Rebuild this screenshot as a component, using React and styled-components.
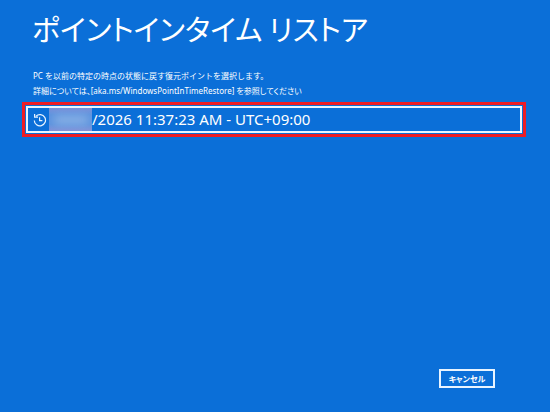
import React from 'react';
import styled, { createGlobalStyle } from 'styled-components';

const GlobalStyle = createGlobalStyle`
  * {
    box-sizing: border-box;
  }

  body {
    margin: 0;
    background: #0b6fd8;
    color: #fff;
    font-family: "Noto Sans", "Noto Sans CJK JP", sans-serif;
  }
`

const Page = styled.main`
  display: flex;
  flex-direction: column;
  min-height: 100vh;
  padding: 6px 24px 24px 22px;
`

const Title = styled.h1`
  margin: 0 0 18px;
  padding-left: 10px;
  font-family: "Noto Sans CJK JP", sans-serif;
  font-feature-settings: "palt";
  font-size: 29px;
  font-weight: 400;
  line-height: 44px;
`

const Description = styled.p`
  margin: 0;
  padding-left: 11px;
  font-size: 8px;
  line-height: 15px;
  font-feature-settings: ${props => props.$compact ? '"palt"' : 'normal'};
`

const RestorePoints = styled.ul`
  margin: 4px 0 0;
  padding: 0;
  list-style: none;
`

const Highlight = styled.li`
  padding: 1px;
  border: 3px solid #ee1c25;
`

const RestorePoint = styled.button`
  display: flex;
  align-items: center;
  width: 100%;
  height: 27px;
  padding: 0 5px;
  border: 2px solid #e9f4ff;
  background: transparent;
  color: inherit;
  font: inherit;
  font-size: 15px;
  line-height: 23px;
  text-align: left;
`

const HistoryIcon = styled.svg`
  flex: none;
  width: 14px;
  height: 14px;
  margin-right: 2px;
`

const Redacted = styled.span`
  flex: none;
  width: 43px;
  height: 23px;
  overflow: hidden;
  background: linear-gradient(#7d90d9, #5c93de 30%, #5c93de 70%, #8592d8);

  &::before {
    content: "";
    display: block;
    width: 34px;
    height: 10px;
    margin: 7px 5px;
    background: #86aee5;
    filter: blur(4px);
  }
`

const Footer = styled.footer`
  display: flex;
  justify-content: flex-end;
  margin-top: auto;
  padding-right: 31px;
`

const CancelButton = styled.button`
  width: 56px;
  height: 19px;
  padding: 0;
  border: 2px solid #e9f4ff;
  background: transparent;
  color: inherit;
  font: inherit;
  font-feature-settings: "palt";
  font-size: 8px;
  font-weight: 700;
  line-height: 15px;
`

const App = () =>
  <>
    <GlobalStyle />
    <Page>
      <Title>ポイントインタイム リストア</Title>
      <Description>PC を以前の特定の時点の状態に戻す復元ポイントを選択します。</Description>
      <Description $compact>詳細については、[aka.ms/WindowsPointInTimeRestore] を参照してください</Description>
      <RestorePoints>
        <Highlight>
          <RestorePoint type="button">
            <HistoryIcon viewBox="0 0 14 14" fill="none" stroke="#e9f4ff" strokeWidth="1.2" aria-hidden="true">
              <path d="M3 3.2A5.6 5.6 0 1 1 1.3 7.4" />
              <path d="M1.6 1v3.2h3.4" />
              <path d="M6.6 4.2v3.4h2.8" />
            </HistoryIcon>
            <Redacted />
            /2026 11:37:23 AM - UTC+09:00
          </RestorePoint>
        </Highlight>
      </RestorePoints>
      <Footer>
        <CancelButton type="button">キャンセル</CancelButton>
      </Footer>
    </Page>
  </>


export default App
